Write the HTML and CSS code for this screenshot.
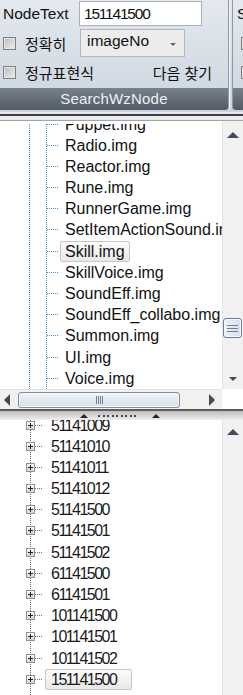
FILE: index.html
```html
<!DOCTYPE html>
<html lang="ko">
<head>
  <meta charset="UTF-8">
  <title>WzNode Search</title>
  <link rel="stylesheet" href="styles.css">
</head>
<body>
  <div class="ribbon">
    <div class="group">
      <div class="group-body">
        <div class="rrow r1">
          <span class="lbl">NodeText</span>
          <div class="textbox num">151141500</div>
        </div>
        <div class="rrow r2">
          <span class="chk"></span><span class="ko opt">정확히</span>
          <div class="combo">imageNo<span class="caret"></span></div>
        </div>
        <div class="rrow r3">
          <span class="chk"></span><span class="ko">정규표현식</span>
          <span class="ko find">다음 찾기</span>
        </div>
      </div>
      <div class="caption">SearchWzNode</div>
    </div>
    <div class="group next">
      <div class="group-body">
        <div class="rrow r1"><span class="lbl">S</span></div>
        <div class="rrow r2"><span class="chk"></span></div>
        <div class="rrow r3"><span class="chk"></span></div>
      </div>
      <div class="caption"></div>
    </div>
  </div>

  <div class="sep"></div>

  <div class="tree t1">
    <div class="tree-body">
      <div class="node"><span class="conn"></span><span class="txt">Puppet.img</span></div>
      <div class="node"><span class="conn"></span><span class="txt">Radio.img</span></div>
      <div class="node"><span class="conn"></span><span class="txt">Reactor.img</span></div>
      <div class="node"><span class="conn"></span><span class="txt">Rune.img</span></div>
      <div class="node"><span class="conn"></span><span class="txt">RunnerGame.img</span></div>
      <div class="node"><span class="conn"></span><span class="txt">SetItemActionSound.img</span></div>
      <div class="node"><span class="conn"></span><span class="txt sel">Skill.img</span></div>
      <div class="node"><span class="conn"></span><span class="txt">SkillVoice.img</span></div>
      <div class="node"><span class="conn"></span><span class="txt">SoundEff.img</span></div>
      <div class="node"><span class="conn"></span><span class="txt">SoundEff_collabo.img</span></div>
      <div class="node"><span class="conn"></span><span class="txt">Summon.img</span></div>
      <div class="node"><span class="conn"></span><span class="txt">UI.img</span></div>
      <div class="node"><span class="conn"></span><span class="txt">Voice.img</span></div>
    </div>
    <div class="vscroll">
      <div class="vbtn"><span class="tri-up"></span></div>
      <div class="vtrack">
        <div class="vthumb"><span class="grip-h"></span></div>
      </div>
      <div class="vbtn"><span class="tri-down"></span></div>
    </div>
  </div>

  <div class="hscroll">
    <div class="hbar">
      <div class="hbtn left"><span class="tri-left"></span></div>
      <div class="hthumb"><span class="grip-v"></span></div>
      <div class="hbtn right"><span class="tri-right"></span></div>
    </div>
    <div class="corner"></div>
  </div>

  <div class="splitter">
    <span class="mini-up"></span>
    <span class="dots"></span>
    <span class="mini-up"></span>
  </div>

  <div class="tree t2">
    <div class="tree-body">
      <div class="node"><span class="pbox"></span><span class="conn"></span><span class="txt">51141009</span></div>
      <div class="node"><span class="pbox"></span><span class="conn"></span><span class="txt">51141010</span></div>
      <div class="node"><span class="pbox"></span><span class="conn"></span><span class="txt">51141011</span></div>
      <div class="node"><span class="pbox"></span><span class="conn"></span><span class="txt">51141012</span></div>
      <div class="node"><span class="pbox"></span><span class="conn"></span><span class="txt">51141500</span></div>
      <div class="node"><span class="pbox"></span><span class="conn"></span><span class="txt">51141501</span></div>
      <div class="node"><span class="pbox"></span><span class="conn"></span><span class="txt">51141502</span></div>
      <div class="node"><span class="pbox"></span><span class="conn"></span><span class="txt">61141500</span></div>
      <div class="node"><span class="pbox"></span><span class="conn"></span><span class="txt">61141501</span></div>
      <div class="node"><span class="pbox"></span><span class="conn"></span><span class="txt">101141500</span></div>
      <div class="node"><span class="pbox"></span><span class="conn"></span><span class="txt">101141501</span></div>
      <div class="node"><span class="pbox"></span><span class="conn"></span><span class="txt">101141502</span></div>
      <div class="node"><span class="pbox"></span><span class="conn"></span><span class="txt sel">151141500</span></div>
    </div>
    <div class="vscroll">
      <div class="vbtn"><span class="tri-up"></span></div>
    </div>
  </div>
</body>
</html>
```

FILE: styles.css
```css
body { margin: 0; width: 243px; height: 695px; overflow: hidden; font-family: "Liberation Sans", "Noto Sans CJK KR", sans-serif; font-size: 15.5px; color: #111; background: #fff; }

/* ribbon */
.ribbon { display: flex; gap: 3px; height: 112px; padding-bottom: 2px; box-sizing: border-box; background: linear-gradient(#e4e9ef, #cbd4de); }
.group { width: 229px; flex: none; display: flex; flex-direction: column; border-right: 1px solid #8e99a6; border-bottom-right-radius: 3px; box-shadow: 1px 0 0 #f3f5f8; box-sizing: border-box; }
.group.next { flex: 1; width: auto; border-right: none; border-left: 1px solid #8e99a6; border-bottom-left-radius: 3px; box-shadow: none; }
.group-body { height: 88px; padding-top: 1px; box-sizing: border-box; }
.rrow { display: flex; align-items: center; }
.r1 { height: 25px; }
.r2 { height: 28px; margin-top: 3px; }
.r3 { height: 24px; margin-top: 3px; }
.lbl { width: 79px; padding-left: 3px; box-sizing: border-box; flex: none; }
.next .lbl { padding-left: 4px; }
.textbox { width: 123px; height: 25px; box-sizing: border-box; border: 1px solid #a8b2be; background: #fff; padding: 0 4px; line-height: 23px; }
.num { letter-spacing: -1.2px; }
.chk { width: 13px; height: 13px; flex: none; box-sizing: border-box; margin: 0 9px 0 3px; border: 1px solid #7e7e7e; background: linear-gradient(135deg, #bcbcbc, #eeeeee); box-shadow: inset 0 0 0 1px #e6e6e6; }
.next .chk { margin-left: 8px; }
.ko { font-size: 15px; white-space: nowrap; }
.opt { width: 55px; flex: none; }
.combo { width: 105px; height: 28px; box-sizing: border-box; border: 1px solid #b6b6b6; background: #ececec; padding: 0 0 4px 6px; display: flex; align-items: center; }
.caret { margin-left: auto; margin-right: 8px; margin-top: 6px; border-left: 3px solid transparent; border-right: 3px solid transparent; border-top: 3px solid #666; }
.find { margin-left: auto; margin-right: 16px; }
.caption { height: 22px; line-height: 22px; text-align: center; font-size: 15px; letter-spacing: 0.2px; color: #eef1f4; background: linear-gradient(#78828d, #515a65); border-bottom-right-radius: 3px; }
.next .caption { border-radius: 0 0 0 3px; }

.sep { height: 9px; background: linear-gradient(#e5e8ec 0 2px, #3a3f47 2px 4px, #ececec 4px 8px, #a4a4a4 8px); }

/* trees */
.tree { display: flex; overflow: hidden; background: #fff; }
.t1 { height: 268px; }
.t2 { height: 275px; }
.tree-body { flex: 1; overflow: hidden; background-repeat: repeat-y; background-size: 1px 2px; background-origin: padding-box; }
.t1 .tree-body { border-top: 3px solid #fff; background-image: linear-gradient(#3d8fe0 50%, transparent 50%), linear-gradient(#3d8fe0 50%, transparent 50%); background-position: 29px 0, 46px 0; }
.t2 .tree-body { background-image: linear-gradient(#6e6e6e 50%, transparent 50%); background-position: 30px 0; }
.node { height: 21.2px; display: flex; align-items: center; white-space: nowrap; font-size: 16px; }
.t1 .node:first-child { margin-top: -10.6px; }
.t2 .node:first-child { margin-top: -5.6px; }
.t1 .node { padding-left: 47px; }
.t2 .node { padding-left: 26px; color: #1a1a1a; }
.conn { height: 1px; flex: none; background: linear-gradient(90deg, #3d8fe0 50%, transparent 50%) 0 0 / 2px 1px repeat-x; }
.t1 .conn { width: 11px; }
.t2 .conn { width: 7px; background-image: linear-gradient(90deg, #6e6e6e 50%, transparent 50%); }
.txt { flex: none; height: 21px; line-height: 19px; margin-left: 2px; padding: 0 4px; border: 1px solid transparent; border-radius: 2px; box-sizing: border-box; }
.t2 .txt { margin-left: 3px; padding: 0 15px 0 5px; letter-spacing: -1.5px; }
.sel { border-color: #c6c6c6; background: linear-gradient(#fbfbfb, #e8e8e8); }
.pbox { width: 9px; height: 9px; flex: none; box-sizing: border-box; border: 1px solid #929292; background: linear-gradient(#222, #222) center / 5px 1px no-repeat, linear-gradient(#222, #222) center / 1px 5px no-repeat, linear-gradient(#fff, #d6d6d6); }

/* scrollbars */
.vscroll { width: 21px; flex: none; box-sizing: border-box; border-left: 1px solid #e4e4e4; background: #f1f1f1; display: flex; flex-direction: column; }
.t1 .vscroll { padding-top: 3px; }
.t2 .vscroll { padding-top: 1px; }
.vbtn { height: 22px; flex: none; display: flex; justify-content: center; align-items: center; }
.t1 .vbtn:last-child { height: 21px; }
.vtrack { flex: 1; }
.vthumb { margin-top: 172px; width: 19px; height: 20px; box-sizing: border-box; border: 1px solid #6a7d9e; border-radius: 3px; background: linear-gradient(90deg, #eef2f7, #d8e0ea); box-shadow: inset 0 0 0 1px #f8fafc; display: flex; justify-content: center; align-items: center; }
.grip-h { width: 11px; height: 7px; background: repeating-linear-gradient(#6f7f96 0 1px, transparent 1px 3px); }
.tri-up { border-left: 6px solid transparent; border-right: 6px solid transparent; border-bottom: 6px solid #3e4a5f; }
.tri-down { border-left: 4px solid transparent; border-right: 4px solid transparent; border-top: 4px solid #3e4a5f; }
.tri-left { border-top: 6px solid transparent; border-bottom: 6px solid transparent; border-right: 6px solid #3e4a5f; }
.tri-right { border-top: 6px solid transparent; border-bottom: 6px solid transparent; border-left: 6px solid #3e4a5f; }

.hscroll { display: flex; height: 20px; }
.hbar { width: 222px; flex: none; display: flex; align-items: center; background: #f1f1f1; border-top: 1px solid #e4e4e4; box-sizing: border-box; }
.hbtn { height: 100%; display: flex; justify-content: center; align-items: center; }
.hbtn.left { width: 14px; }
.hbtn.right { width: 21px; margin-left: auto; }
.hthumb { width: 162px; height: 16px; margin-left: 4px; box-sizing: border-box; border: 1px solid #7d8ca6; border-radius: 3px; background: linear-gradient(#f2f5f9, #d7dee8); box-shadow: inset 0 0 0 1px #fafbfd; display: flex; justify-content: center; align-items: center; }
.grip-v { width: 7px; height: 8px; background: repeating-linear-gradient(90deg, #6f7f96 0 1px, transparent 1px 2px); }
.corner { flex: 1; background: #fff; }

.splitter { height: 11px; box-sizing: border-box; border-top: 2px solid #5d5d5d; background: linear-gradient(#bdbdbd, #efefef); display: flex; align-items: center; padding-left: 80px; }
.mini-up { border-left: 4px solid transparent; border-right: 4px solid transparent; border-bottom: 4px solid #222; }
.dots { width: 41px; height: 2px; margin: 0 13px 0 10px; background: repeating-linear-gradient(90deg, #444 0 2px, transparent 2px 4.5px); }
```
